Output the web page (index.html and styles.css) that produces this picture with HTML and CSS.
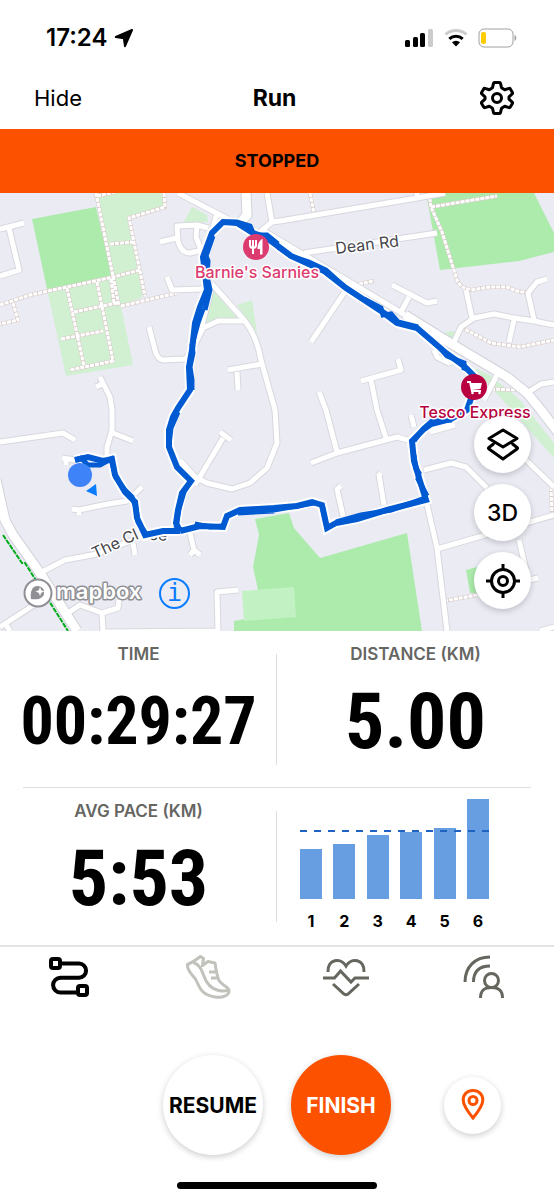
FILE: index.html
```html
<!DOCTYPE html>
<html lang="en">
<head>
    <meta charset="UTF-8">
    <meta name="viewport" content="width=device-width, initial-scale=1.0">
    <title>Run</title>
    <link rel="stylesheet" href="styles.css">
</head>
<body>
    <!-- Status bar -->
    <div class="status-bar">
        <div class="status-left">
            <span class="clock">17:24</span>
            <svg width="20" height="20" viewBox="0 0 20 20"><path class="location" d="M18 2 1.800 9l8 1.200L11 18.200z"/></svg>
        </div>
        <div class="status-right">
            <svg width="29" height="20" viewBox="0 0 29 20">
                <rect x="0" y="12" width="5" height="7" rx="1.500"/>
                <rect x="8" y="9" width="5" height="10" rx="1.500"/>
                <rect x="15" y="5" width="5" height="14" rx="1.500"/>
                <rect class="dim" x="23" y="1" width="5" height="18" rx="1.500"/>
            </svg>
            <svg width="24" height="20" viewBox="0 0 24 20">
                <path class="wifi dim-line" d="M1.500 6.500a15.500 15.500 0 0 1 21 0"/>
                <path class="wifi" d="M5.300 10.800a10 10 0 0 1 13.400 0"/>
                <path d="M8 14.300a6 6 0 0 1 8 0l-4 4.200z"/>
            </svg>
            <svg width="39" height="20" viewBox="0 0 39 20">
                <rect class="battery" x="1" y="1" width="34" height="18" rx="5"/>
                <rect class="charge" x="3" y="4" width="5" height="12" rx="2"/>
                <path class="nub" d="M36.500 7c2.400.8 2.400 5.200 0 6z"/>
            </svg>
        </div>
    </div>

    <header class="header">
        <button class="hide-button">Hide</button>
        <h1>Run</h1>
        <button class="settings-button" aria-label="Settings">
            <svg class="line-icon" width="36" height="36" viewBox="0 0 36 36">
                <path d="M15.500 2.500h5q.8 0 1 .8l1 4.400 3.200 2 4.400-1.300q.8-.2 1.200.5l2.100 3.700q.4.700-.2 1.300L30 16.800v2.400l3.200 2.900q.6.600.2 1.300l-2.100 3.700q-.4.700-1.200.5l-4.400-1.300-3.200 2-1 4.400q-.2.800-1 .8h-5q-.8 0-1-.8l-1-4.400-3.200-2-4.400 1.300q-.8.200-1.200-.5l-2.100-3.700q-.4-.7.2-1.300L6 19.200v-2.400l-3.200-2.900q-.6-.6-.2-1.300l2.100-3.700q.4-.7 1.200-.5l4.400 1.300 3.200-2 1-4.400q.2-.8 1-.8z"/>
                <circle cx="18" cy="18" r="4.500"/>
            </svg>
        </button>
    </header>

    <div class="banner">STOPPED</div>

    <!-- Map -->
    <div class="map">
        <svg class="map-canvas" viewBox="0 193 554 438">
            <defs>
                <g id="streets">
                    <path d="M0 229 24 223M9 228l10 42-19 6M160 242l16-4M208 228l-11-3-20 1 1 15q3 12 12 12l13-3M197 226l-1 11 5 13M178 193l50 26M217 213l-4 14M267 193l5 29M260 232l12-10 8-1 137-23 28-5M417 193v5"/>
                    <path d="M167 277l5 13 30-1M211 290l-11 43M245 321h-27l-15 7-13 27-5 4-22 1q-6-1-8-10l-6-23M228 370l34-6M237 372l1 18M96 387l6-3M100 377l10 20 2 13v20l-5 17v13M113 433l20 8M0 442l63-9 12 7M62 458l13 2M66 460v5"/>
                    <path d="M212 284l33 37q12 16 16 39l14 50 2 33-10 25-17 15-18 6-25-6-12-6-15-17M223 438l-28 47M220 432l11 8M72 509l7 1 29-6 19-3 15-14M79 510v5M40 573l25-13 32-6 36-14M133 543l2 12M190 533l4 17-4 5M194 550l6 5"/>
                    <path d="M0 627l37-24M6 625l4 6M68 613l12-8 22 8 16-5 1-8M102 613l1 18M238 590l-21 2 1 39M105 632l113-1"/>
                    <path d="M304 253l133-20M346 290l-35 52M392 285l35 18 10-2M409 297l-8 15M454 342l7-15 13-9 20-4 20 4 20 3 20 4M466 290l6 28M514 320l-5 22M534 320l-6-27 9-11 10-3M434 350l3 7 12 6 7-3M361 381l40-11-3-11M371 380l6 30 9 28M319 392l7 18 11 42"/>
                    <path d="M311 463l26-10 60-16 14 4M411 415l3 12M430 432l25-7M424 470l27-7 15 4 21 21M426 500l11 48 10 83M437 549l117-34M519 540l7 30M524 458l30 29M341 486l-4 3 6 27M381 473l-2 2 5 30M520 582l18-4M540 631l14-4M497 375l-13 25M527 393l14-9 13-2"/>
                    <path d="M264 231l20 12 66 39 55 33"/>
                </g>
                <g id="main-roads">
                    <path d="M246 193l1 22-6 7M-4 480l9 40 8 15 27 38 37 58M405 315l45 28 57 34 20 16 14 17 19 25"/>
                </g>
                <g id="paths">
                    <path d="M96 193l23 113M97 196l18-4M164 193l1 14-36 11 16 78M110 244l23-2M0 305l30-10 83-18 27-7M67 288l17 78M97 282l16 79-43 9M61 339l42-8M74 312l43-9M111 279l3 24M121 306l56-13M13 303l5 17-18 4"/>
                    <path d="M310 193l4 20M431 207l66-11M429 193l2 14 11 25 15 48q3 8 14 10l19-3h17l10 4 11 2M354 285l20-4M461 327l30 16 29 4 34-7M491 389l26 1M444 601l33-6M551 487l1 28"/>
                </g>
                <g id="route">
                    <path d="M180 531l-4-8 2-13 4-17 9-12-14-14-8-20v-17l4-13 5-9 12-18-1-23 3-17 3-27 5-16 7-17-4-33 9-24 11-11 14 1 16 10 14 5 24 18 33 15 22 17 38 25 13 10 20 5 29 25 18 13 10 10 0 14-7 20-16 9-20 5-7 5-12 12 2 20 6 20 6 19-39 10-30 9-21 4-9 5-5-23-10-3-15 4-23 2-34 2-13 6-4 11-23-1-20 5"/>
                    <path d="M180 531l-17 0-18 4-8-17-2-16-10-10-10-17-3-16-9 2-15-4-13 3"/>
                </g>
                <path id="close-line" d="M95 559l43-20 34 2"/>
            </defs>

            <rect class="land" y="193" width="554" height="438"/>
            <path class="park-light" d="M96 193h69v13l-36 12 14 79-22 9 12 59-67 11-19-87 65-12zM192 207l15 8 1 7h-24zM213 290l25 29-33 3zM237 305l15-5 5 33zM442 333l12-2 2 12zM474 368l16 7 30 25 34 43v15l-40-45z"/>
            <path class="park" d="M32 219l64-12 16 70-65 12zM426 193h108l20 40v19l-35 9-79 9zM255 519l34-6 5 15 26 30 87-25 15 98H234v-10l24-4v-27l-5-23 6-32zM466 570l11-3v26h-7z"/>
            <path class="park-pale" d="M242 591l52-4 2 30-52 4z"/>

            <use class="path-edge" href="#paths"/>
            <use class="path-fill" href="#paths"/>
            <use class="street-edge" href="#streets"/>
            <use class="main-edge" href="#main-roads"/>
            <use class="street-fill" href="#streets"/>
            <use class="main-fill" href="#main-roads"/>
            <path class="cycle-way" d="M3 535l19 28h3l43 68"/>

            <text class="street-name" x="336" y="254" transform="rotate(-7 336 254)">Dean Rd</text>
            <text class="street-name"><textPath href="#close-line">The Close</textPath></text>

            <use class="route-edge" href="#route"/>
            <use class="route-line" href="#route"/>
            <!-- second GPS trace and the jitter along the route -->
            <path class="route-thin" d="M75 460l6-2 7 7 12 0 11-6 5 19 9 12 7 7 4 11 2 14 8 12M176 528l3-19 5-17 7-11M169 445l2-17 7-16M192 390l0-10-2-13 3-14 -1-8 6-22 5-14M205 310l5-20-3-14 1-15-2-5 7-20M222 222l15 0 13 4 4 9 13 0 11 9M278 247l13 9 18 6 17 8 20 18M364 299l17 9 2 7 8-1 7 8 20 5M440 348l7 8 17 7 0 5 5 2M414 441l9-12 9-8 20-1M414 455l2 14 3 4-1 6 9 17M239 511l35-1 40-7M238 513l36-2M336 522l25-7 30-5 34-12M322 506l5 22M200 527l-5-3 15 3 13-1"/>
            <circle class="position" cx="80" cy="475" r="12"/>
            <path class="heading" d="M86 491l10-7 1 12z"/>

            <circle class="pin-food" cx="256" cy="247" r="13"/>
            <path class="glyph-line" d="M250 240v5q0 3 3 3t3-3v-5M253 240v14"/>
            <path class="glyph" d="M262 239c-3 2-4.500 5-4.500 10h2.500v5.500h2.500V239z"/>
            <text class="place food" x="257" y="278">Barnie's Sarnies</text>

            <circle class="pin-shop" cx="474" cy="387" r="13"/>
            <path class="glyph-line" d="M467 382h3l2 9h9"/>
            <path class="glyph" d="M470.500 383h11.500l-1.500 6-8.500 1z"/>
            <circle class="glyph" cx="472.500" cy="393" r="1.300"/>
            <circle class="glyph" cx="479.500" cy="393" r="1.300"/>
            <text class="place shop" x="475" y="418">Tesco Express</text>
        </svg>

        <div class="attribution">
            <a href="#mapbox" class="mapbox" aria-label="mapbox">
                <svg width="125" height="32" viewBox="0 0 125 32">
                    <circle class="logo-ring" cx="16" cy="16" r="13.500"/>
                    <path class="logo-mark" d="M9 22c-.8-7 .5-13 7-13a6.300 6.300 0 0 1 6 8c-1 4-5 6-13 5z"/>
                    <path class="logo-star" d="M18 10l1.300 3.200 3.200 1.300-3.200 1.300L18 19l-1.300-3.200-3.200-1.300 3.200-1.300z"/>
                    <text class="logo-text" x="34" y="22">mapbox</text>
                </svg>
            </a>
            <button class="info-button" aria-label="Map information">i</button>
        </div>

        <div class="map-controls">
            <button class="map-button" aria-label="Map layers">
                <svg class="line-icon" width="36" height="36" viewBox="0 0 36 36">
                    <path d="M18 3l14 8.500L18 20 4 11.500zM9 16.500L4 20.500c-.8.700-.8 1 0 1.500L18 32l14-10c.8-.5.8-.8 0-1.500l-5-4"/>
                </svg>
            </button>
            <button class="map-button">3D</button>
            <button class="map-button" aria-label="Centre on me">
                <svg class="line-icon" width="36" height="36" viewBox="0 0 36 36">
                    <circle cx="18" cy="18" r="11.500"/>
                    <circle cx="18" cy="18" r="4.500"/>
                    <path d="M18 1v7M18 28v7M1 18h7M28 18h7"/>
                </svg>
            </button>
        </div>
    </div>

    <!-- Stats -->
    <main class="stats">
        <section class="row">
            <div class="cell">
                <h2>TIME</h2>
                <p class="value">00:29:27</p>
            </div>
            <div class="cell">
                <h2>DISTANCE (KM)</h2>
                <p class="value large">5.00</p>
            </div>
        </section>
        <section class="row">
            <div class="cell">
                <h2>AVG PACE (KM)</h2>
                <p class="value large">5:53</p>
            </div>
            <div class="cell chart">
                <div class="bars">
                    <div class="bar" style="height: 50%"></div>
                    <div class="bar" style="height: 55%"></div>
                    <div class="bar" style="height: 64%"></div>
                    <div class="bar" style="height: 67%"></div>
                    <div class="bar" style="height: 71%"></div>
                    <div class="bar" style="height: 100%"></div>
                    <div class="average"></div>
                </div>
                <div class="bar-labels">
                    <span>1</span><span>2</span><span>3</span><span>4</span><span>5</span><span>6</span>
                </div>
            </div>
        </section>
    </main>

    <nav class="tabs">
        <button class="tab active" aria-label="Route">
            <svg width="46" height="46" viewBox="0 0 46 46">
                <rect x="5" y="4" width="9" height="9" rx="2"/>
                <rect x="32" y="31" width="9" height="9" rx="2"/>
                <path d="M14 8.500h19a7 7 0 0 1 0 14.200H14.500a7.200 7.200 0 0 0 0 14.800H32"/>
            </svg>
        </button>
        <button class="tab muted" aria-label="Shoes">
            <svg width="46" height="46" viewBox="0 0 46 46">
                <path d="M2.500 9.500C6 8 11 5 15.500 1.500l3 2-1 7 5.500-4 7 1.500c1 7 2 13 4 17.500 3 5 9.500 6 10 10 .5 5.500-7 7.500-14 6.500-12-1.500-15-8-18-15C9 19.500 2 18 2.500 9.500zM8.500 7.500c6 2 8 7 10 12.500 3 9 8 14 15 15.500 4 .8 7.500.5 10-.5M24 17h8M26 23h8"/>
            </svg>
        </button>
        <button class="tab" aria-label="Heart rate">
            <svg width="46" height="46" viewBox="0 0 46 46">
                <path d="M5 17c-1-13 13-15 18-6 5-9 19-7 18 6M0 23h11.500l6-7L28 27l4-4h14M10 29l11 10q2 1.500 4 0l11-10"/>
            </svg>
        </button>
        <button class="tab" aria-label="Beacon">
            <svg width="46" height="46" viewBox="0 0 46 46">
                <path d="M3 27C3 12 13 2 28 2M11.500 27c0-11 6-16 16.500-16"/>
                <circle cx="29.500" cy="25.500" r="7"/>
                <path d="M18.500 43c0-8 4-10.500 11-10.500s11 2.500 11 10.500"/>
            </svg>
        </button>
    </nav>

    <footer class="controls">
        <button class="round-button">RESUME</button>
        <button class="round-button finish">FINISH</button>
        <button class="pin-button" aria-label="Show location">
            <svg width="26" height="34" viewBox="0 0 26 34">
                <path d="M13 2.500c5.800 0 9.800 4 9.800 9.500 0 6-5.300 12.500-9.800 18-4.500-5.500-9.800-12-9.800-18C3.200 6.500 7.200 2.500 13 2.500z"/>
                <circle cx="13" cy="12.500" r="4"/>
            </svg>
        </button>
    </footer>
    <div class="home-indicator"></div>
</body>
</html>
```

FILE: styles.css
```css
* {
    box-sizing: border-box;
}

body {
    margin: 0;
    min-height: 100vh;
    display: flex;
    flex-direction: column;
    background-color: #fff;
    color: #000;
    font-family: Inter, "Liberation Sans", sans-serif;
}

h1, h2, p {
    margin: 0;
}

button {
    padding: 0;
    border: none;
    background: none;
    color: inherit;
    font-family: inherit;
    cursor: pointer;
}

svg {
    display: block;
}

/* Status bar */
.status-bar {
    display: flex;
    justify-content: space-between;
    align-items: center;
    padding: 24px 37px 0 46px;
}

.status-left, .status-right {
    display: flex;
    align-items: center;
    gap: 10px;
}

.status-left {
    gap: 7px;
}

.clock {
    font-size: 24px;
    line-height: 28px;
    font-weight: 600;
}

.location {
    stroke: #000;
    stroke-width: 2;
    stroke-linejoin: round;
}

.dim {
    fill: #ccc;
}

.wifi {
    fill: none;
    stroke: #000;
    stroke-width: 3;
}

.dim-line {
    stroke: #ccc;
}

.battery {
    fill: none;
    stroke: #a0a0a0;
    stroke-width: 1;
}

.nub {
    fill: #a0a0a0;
}

.charge {
    fill: #fc0;
}

/* Header */
.header {
    display: grid;
    grid-template-columns: 1fr auto 1fr;
    align-items: center;
    padding: 28px 39px 13px 34px;
}

.hide-button {
    justify-self: start;
    font-size: 22px;
}

.header h1 {
    font-size: 23px;
    font-weight: 700;
}

.settings-button {
    justify-self: end;
}

.line-icon {
    fill: none;
    stroke: #000;
    stroke-width: 3;
    stroke-linejoin: round;
}

.banner {
    background-color: #fc5200;
    font-size: 18px;
    line-height: 64px;
    font-weight: 700;
    text-align: center;
}

/* Map */
.map {
    position: relative;
    overflow: hidden;
}

.map-canvas {
    width: 100%;
}

.land {
    fill: #ebebf4;
}

.park {
    fill: #adebad;
}

.park-light {
    fill: #d0f0d1;
}

.park-pale {
    fill: #c2f1c3;
}

.street-edge, .street-fill, .main-edge, .main-fill, .path-edge, .path-fill {
    fill: none;
    stroke-linejoin: round;
}

.street-edge {
    stroke: #d7d7de;
    stroke-width: 7;
}

.street-fill {
    stroke: #fff;
    stroke-width: 5;
}

.main-edge {
    stroke: #d2d2da;
    stroke-width: 11;
}

.main-fill {
    stroke: #fff;
    stroke-width: 9;
}

.path-edge {
    stroke: #d9cbc9;
    stroke-width: 4;
}

.path-fill {
    stroke: #fff;
    stroke-width: 3;
    stroke-dasharray: 4 1;
}

.cycle-way {
    fill: none;
    stroke: #00ac1c;
    stroke-width: 2;
    stroke-dasharray: 5 1;
}

.street-name, .place {
    stroke: #fff;
    stroke-width: 3;
    stroke-linejoin: round;
    paint-order: stroke;
}

.street-name {
    fill: #46464b;
    font-size: 16px;
}

.place {
    font-size: 16px;
    font-weight: 500;
    text-anchor: middle;
}

.food {
    fill: #dc3b70;
}

.shop {
    fill: #b80040;
}

.route-edge, .route-line, .route-thin {
    fill: none;
    stroke: #005ad2;
    stroke-linejoin: miter;
}

.route-edge {
    stroke: #fff;
    stroke-width: 10;
}

.route-line {
    stroke-width: 6;
}

.route-thin {
    stroke-width: 5;
}

.position {
    fill: #3f83f8;
}

.heading {
    fill: #0a7cff;
}

.pin-food {
    fill: #dc3b70;
}

.pin-shop {
    fill: #b80040;
}

.glyph {
    fill: #fff;
}

.glyph-line {
    fill: none;
    stroke: #fff;
    stroke-width: 2;
}

.attribution {
    position: absolute;
    left: 22px;
    bottom: 22px;
    display: flex;
    align-items: center;
    gap: 12px;
}

.logo-ring {
    fill: #fff;
    stroke: #8f8f94;
    stroke-width: 2;
}

.logo-mark {
    fill: #8f8f94;
}

.logo-star {
    fill: #fff;
}

.logo-text {
    fill: #fff;
    stroke: #8f8f94;
    stroke-width: 3;
    stroke-linejoin: round;
    paint-order: stroke;
    font-size: 22px;
    font-weight: 600;
}

.info-button {
    width: 31px;
    height: 31px;
    border: 2px solid #0a7cff;
    border-radius: 50%;
    color: #0a7cff;
    font-family: "DejaVu Sans Mono", monospace;
    font-size: 25px;
    line-height: 26px;
}

.map-controls {
    position: absolute;
    right: 23px;
    bottom: 22px;
    display: flex;
    flex-direction: column;
    gap: 11px;
}

.map-button {
    display: flex;
    justify-content: center;
    align-items: center;
    width: 57px;
    height: 57px;
    border-radius: 50%;
    background-color: #fff;
    box-shadow: 0 2px 6px rgba(0, 0, 0, 0.2);
    font-size: 23px;
    font-weight: 500;
}

/* Stats */
.row {
    position: relative;
    display: grid;
    grid-template-columns: 1fr 1fr;
    height: 157px;
}

.row:first-child::after {
    content: "";
    position: absolute;
    left: 23px;
    right: 23px;
    bottom: 0;
    height: 1px;
    background-color: #dedee0;
}

.row::before {
    content: "";
    position: absolute;
    right: 50%;
    top: 23px;
    bottom: 23px;
    width: 1px;
    background-color: #dedee0;
}

.cell {
    padding-top: 12px;
    text-align: center;
}

.cell h2 {
    color: #666663;
    font-size: 17px;
    line-height: 22px;
    font-weight: 600;
}

.value {
    font-family: "Roboto Condensed", Roboto, sans-serif;
    font-size: 66px;
    line-height: 114px;
    font-weight: 700;
}

.large {
    font-size: 78px;
}

.chart {
    padding: 11px 65px 0 23px;
}

.bars {
    position: relative;
    display: flex;
    justify-content: space-between;
    align-items: flex-end;
    height: 100px;
}

.bar {
    width: 22px;
    background-color: #669ee1;
}

.average {
    position: absolute;
    left: 0;
    right: 0;
    bottom: 67px;
    height: 2px;
    background: repeating-linear-gradient(90deg, #1f63c2 0 7px, transparent 7px 14px);
}

.bar-labels {
    display: flex;
    justify-content: space-between;
    padding-top: 11px;
    font-size: 16px;
    line-height: 22px;
    font-weight: 700;
}

.bar-labels span {
    width: 22px;
}

/* Bottom tabs and controls */
.tabs {
    display: grid;
    grid-template-columns: repeat(4, 1fr);
    padding-top: 8px;
    border-top: 2px solid #e4e4e4;
}

.tab {
    display: flex;
    justify-content: center;
}

.tab svg {
    fill: none;
    stroke: #66665f;
    stroke-width: 3;
}

.tab.active svg {
    stroke: #000;
    stroke-width: 4;
}

.tab.muted svg {
    stroke: #c2c2bc;
    stroke-linejoin: round;
}

.controls {
    display: flex;
    justify-content: flex-end;
    align-items: center;
    gap: 28px;
    margin-top: auto;
    padding-right: 53px;
}

.round-button {
    width: 100px;
    height: 100px;
    border-radius: 50%;
    background-color: #fff;
    box-shadow: 0 2px 6px rgba(0, 0, 0, 0.2);
    font-size: 21px;
    font-weight: 700;
}

.finish {
    background-color: #fc5200;
    color: #fff;
}

.pin-button {
    display: flex;
    justify-content: center;
    align-items: center;
    width: 57px;
    height: 57px;
    margin-left: 25px;
    border-radius: 50%;
    box-shadow: 0 2px 6px rgba(0, 0, 0, 0.2);
}

.pin-button svg {
    fill: none;
    stroke: #fc5200;
    stroke-width: 3;
}

.home-indicator {
    width: 36%;
    height: 7px;
    margin: 27px auto 11px;
    border-radius: 4px;
    background-color: #000;
}
```
